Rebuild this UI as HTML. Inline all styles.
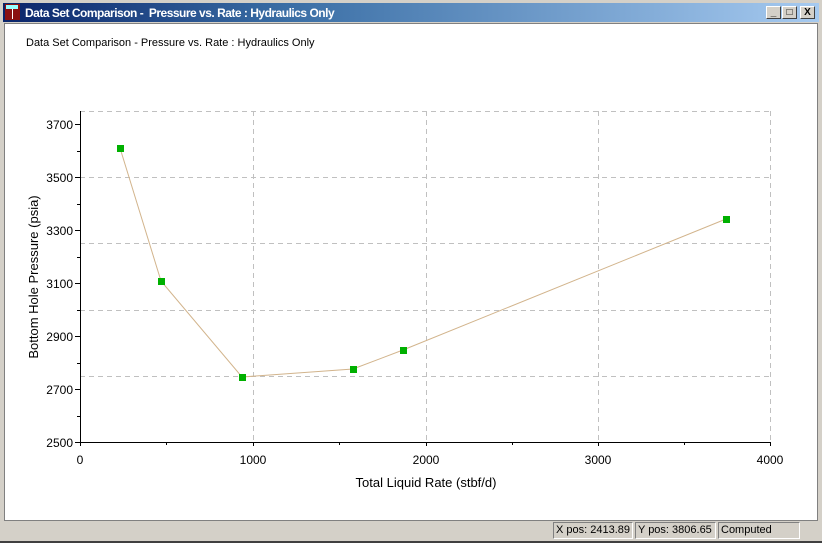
<!DOCTYPE html>
<html><head><meta charset="utf-8"><style>
body{margin:0;width:822px;height:543px;overflow:hidden;background:#d4d0c8;font-family:"Liberation Sans",sans-serif;position:relative}
.tb{position:absolute;left:3px;top:3px;width:816px;height:19px;background:linear-gradient(90deg,#0a246a 0%,#3a6ea5 35%,#a6caf0 100%)}
.tt{position:absolute;left:22px;top:3px;color:#fff;font-weight:bold;font-size:12px;letter-spacing:-0.5px;white-space:nowrap}
.btn{position:absolute;top:3px;width:15px;height:13px;background:#d4d0c8;border:1px solid;border-color:#fff #404040 #404040 #fff;box-sizing:border-box;font-size:10px;text-align:center;line-height:11px;font-weight:bold;color:#000}
.client{position:absolute;left:4px;top:23px;width:812px;height:496px;background:#fff;border:1px solid #808080}
.sb{position:absolute;top:522px;height:17px;border:1px solid;border-color:#808080 #fff #fff #808080;box-sizing:border-box;line-height:15px;padding-left:2px;font-family:"Liberation Sans",sans-serif;font-size:11px;white-space:nowrap;overflow:hidden}
</style></head><body>
<div class="tb">
<div style="position:absolute;left:2px;top:1px;width:15px;height:16px;background:#8b1010"><div style="position:absolute;left:1px;top:1px;width:12px;height:4px;background:#9ff"></div><div style="position:absolute;left:7px;top:5px;width:1px;height:10px;background:#fff"></div></div>
<div class="tt">Data Set Comparison -&nbsp; Pressure vs. Rate : Hydraulics Only</div>
<div class="btn" style="left:763px">_</div>
<div class="btn" style="left:779px">□</div>
<div class="btn" style="left:797px">X</div>
</div>
<div class="client"></div>
<svg width="822" height="543" style="position:absolute;left:0;top:0" font-family="Liberation Sans, sans-serif">
<text x="26" y="46" font-size="11">Data Set Comparison -  Pressure vs. Rate : Hydraulics Only</text>
<g stroke="#c0c0c0" stroke-dasharray="5,4" stroke-width="1">
<line x1="80" y1="111.5" x2="770" y2="111.5"/><line x1="80" y1="177.5" x2="770" y2="177.5"/><line x1="80" y1="243.5" x2="770" y2="243.5"/><line x1="80" y1="310.5" x2="770" y2="310.5"/><line x1="80" y1="376.5" x2="770" y2="376.5"/>
<line x1="253.5" y1="111" x2="253.5" y2="442"/><line x1="426.5" y1="111" x2="426.5" y2="442"/><line x1="598.5" y1="111" x2="598.5" y2="442"/><line x1="770.5" y1="111" x2="770.5" y2="442"/>
</g>
<g stroke="#000" stroke-width="1">
<line x1="80.5" y1="111" x2="80.5" y2="443"/><line x1="80" y1="442.5" x2="771" y2="442.5"/>
<line x1="75" y1="124.5" x2="80" y2="124.5"/><line x1="77" y1="151.5" x2="80" y2="151.5"/><line x1="75" y1="177.5" x2="80" y2="177.5"/><line x1="77" y1="204.5" x2="80" y2="204.5"/><line x1="75" y1="230.5" x2="80" y2="230.5"/><line x1="77" y1="257.5" x2="80" y2="257.5"/><line x1="75" y1="283.5" x2="80" y2="283.5"/><line x1="77" y1="310.5" x2="80" y2="310.5"/><line x1="75" y1="336.5" x2="80" y2="336.5"/><line x1="77" y1="363.5" x2="80" y2="363.5"/><line x1="75" y1="389.5" x2="80" y2="389.5"/><line x1="77" y1="416.5" x2="80" y2="416.5"/><line x1="75" y1="442.5" x2="80" y2="442.5"/>
<line x1="80.5" y1="442" x2="80.5" y2="446"/><line x1="166.5" y1="442" x2="166.5" y2="445"/><line x1="253.5" y1="442" x2="253.5" y2="446"/><line x1="339.5" y1="442" x2="339.5" y2="445"/><line x1="426.5" y1="442" x2="426.5" y2="446"/><line x1="512.5" y1="442" x2="512.5" y2="445"/><line x1="598.5" y1="442" x2="598.5" y2="446"/><line x1="684.5" y1="442" x2="684.5" y2="445"/><line x1="770.5" y1="442" x2="770.5" y2="446"/>
</g>
<g font-size="12" text-anchor="end" fill="#000">
<text x="73" y="129">3700</text><text x="73" y="182">3500</text><text x="73" y="235">3300</text><text x="73" y="288">3100</text><text x="73" y="341">2900</text><text x="73" y="394">2700</text><text x="73" y="447">2500</text>
</g>
<g font-size="12" text-anchor="middle">
<text x="80" y="464">0</text><text x="253" y="464">1000</text><text x="426" y="464">2000</text><text x="598" y="464">3000</text><text x="770" y="464">4000</text>
</g>
<text x="426" y="487" font-size="13" text-anchor="middle">Total Liquid Rate (stbf/d)</text>
<text transform="translate(38,277) rotate(-90)" font-size="13" text-anchor="middle">Bottom Hole Pressure (psia)</text>
<polyline fill="none" stroke="#d2b48c" stroke-width="1" points="120,148 161,281 242,377 353,369 403,350 726,219"/>
<g fill="#00b000">
<rect x="117" y="145" width="7" height="7"/><rect x="158" y="278" width="7" height="7"/><rect x="239" y="374" width="7" height="7"/><rect x="350" y="366" width="7" height="7"/><rect x="400" y="347" width="7" height="7"/><rect x="723" y="216" width="7" height="7"/>
</g>
</svg>
<div class="sb" style="left:553px;width:80px">X pos: 2413.89</div>
<div class="sb" style="left:635px;width:81px">Y pos: 3806.65</div>
<div class="sb" style="left:718px;width:82px">Computed</div>
<div style="position:absolute;left:0;top:541px;width:822px;height:2px;background:#404040"></div>
</body></html>
